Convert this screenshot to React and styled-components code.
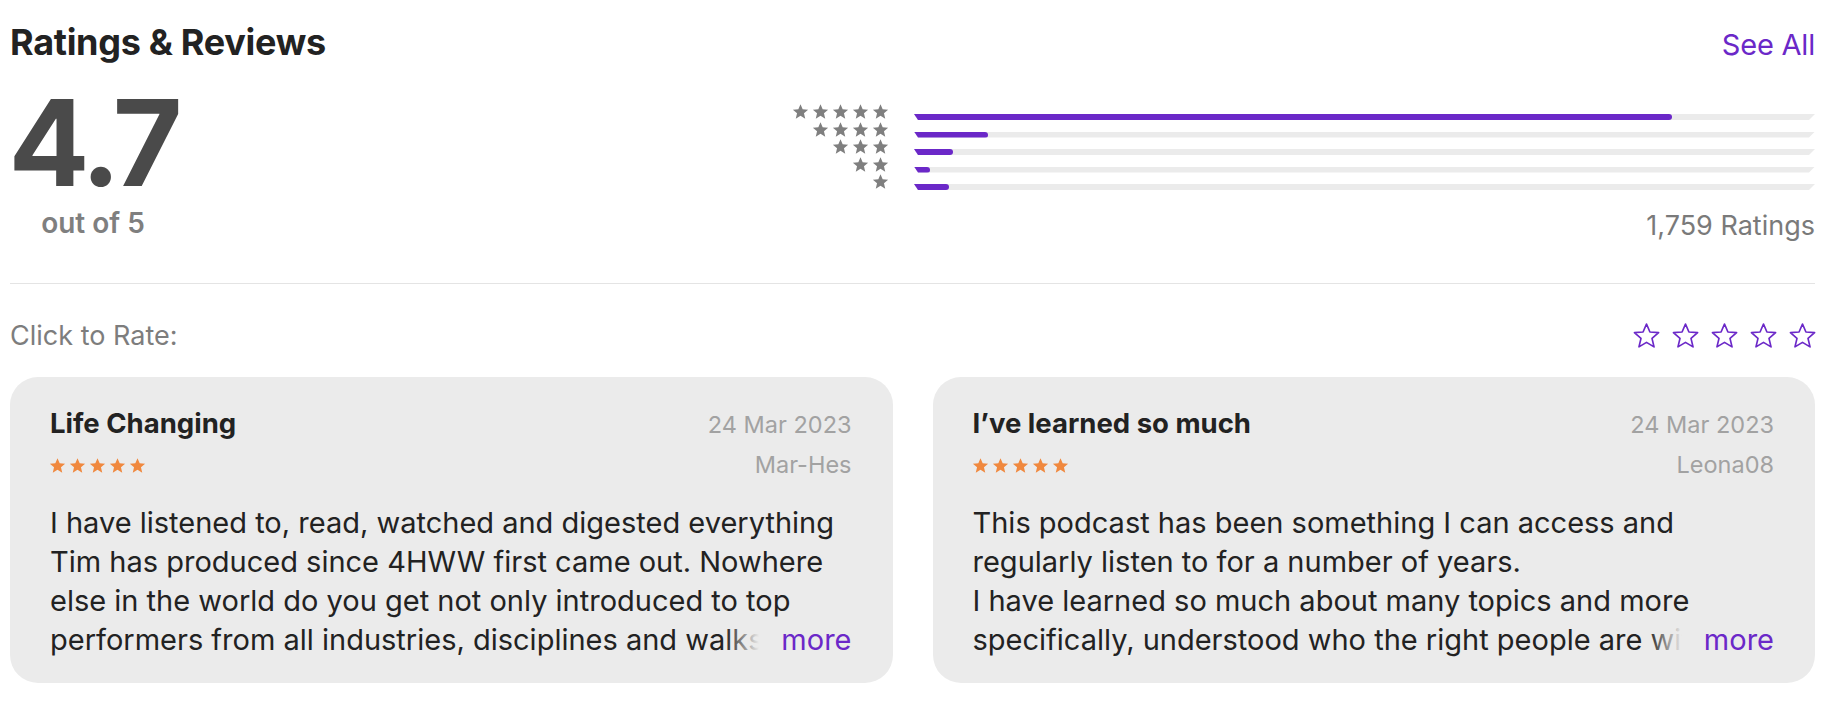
import React from 'react';
import styled, { createGlobalStyle } from 'styled-components';

const PURPLE = '#6b28c8';
const CARD_BG = '#ebebeb';

const GlobalStyle = createGlobalStyle`
  body {
    margin: 0;
    background: #fff;
    font-family: Inter, "Liberation Sans", sans-serif;
    -webkit-font-smoothing: antialiased;
  }
`

const Page = styled.div`
  padding: 19px 21px 0 10px;
`

const Header = styled.div`
  display: flex;
  justify-content: space-between;
  align-items: baseline;
`

const Title = styled.h2`
  margin: 0;
  font-size: 36px;
  line-height: 46px;
  font-weight: 700;
  color: #222;
  letter-spacing: -0.3px;
`

const SeeAll = styled.a`
  font-size: 29px;
  color: ${PURPLE};
  text-decoration: none;
  letter-spacing: -0.2px;
`

// score on the left, histogram on the right
const Summary = styled.div`
  display: flex;
  justify-content: space-between;
  align-items: flex-start;
  padding-bottom: 41px;
  border-bottom: 1px solid #e4e4e4;
`

const Score = styled.div`
  display: flex;
  flex-direction: column;
  align-items: center;
  width: 166px;
  padding-top: 18px;
`

const Big = styled.div`
  font-size: 120px;
  line-height: 120px;
  font-weight: 700;
  color: #4a4a4a;
  letter-spacing: -5px;
`

const OutOf = styled.div`
  font-size: 28px;
  line-height: 32px;
  font-weight: 600;
  color: #7f7f7f;
  margin-top: 4px;
`

const Histogram = styled.div`
  width: 1023px;
  display: flex;
  flex-direction: column;
  align-items: flex-end;
  padding-top: 39px;
`

const Rows = styled.div`
  display: grid;
  grid-template-columns: 97px 1fr;
  grid-auto-rows: 17.5px;
  column-gap: 25px;
  width: 100%;
`

const StarCell = styled.div`
  display: flex;
  justify-content: flex-end;
  align-items: flex-start;
  gap: 3px;
  margin-top: -1px;
`

const Track = styled.div`
  height: 6px;
  margin-top: 10px;
  background: #ebebeb;
  clip-path: polygon(0 0, 100% 0, calc(100% - 6px) 100%, 4px 100%);
`

const Fill = styled.div`
  height: 100%;
  background: ${PURPLE};
  border-radius: 0 3px 3px 0;
`

const Count = styled.div`
  font-size: 27px;
  line-height: 32px;
  color: #7a7a7a;
  margin-top: 18px;
`

const RateRow = styled.div`
  display: flex;
  justify-content: space-between;
  align-items: center;
  margin-top: 36px;
`

const RateLabel = styled.div`
  font-size: 27px;
  line-height: 32px;
  color: #7d7d7d;
`

const RateStars = styled.div`
  display: flex;
  gap: 12px;
  margin-right: -1px;
`

const Cards = styled.div`
  display: grid;
  grid-template-columns: 1fr 1fr;
  gap: 40px;
  margin-top: 25px;
`

const Card = styled.div`
  background: ${CARD_BG};
  border-radius: 28px;
  padding: 28px 41px 0 40px;
  height: 306px;
  box-sizing: border-box;
`

const CardTop = styled.div`
  display: flex;
  justify-content: space-between;
  align-items: baseline;
`

const CardTitle = styled.div`
  font-size: 27.5px;
  line-height: 36px;
  font-weight: 700;
  color: #222;
`

const Meta = styled.div`
  font-size: 23.5px;
  line-height: 30px;
  color: #a2a2a2;
`

const CardSub = styled.div`
  display: flex;
  justify-content: space-between;
  align-items: center;
  margin-top: 9px;
`

const SmallStars = styled.div`
  display: flex;
  gap: 3px;
  margin-left: -1px;
  padding-top: 2px;
`

const Body = styled.div`
  position: relative;
  margin-top: 23px;
`

const BodyText = styled.p`
  margin: 0;
  font-size: 29px;
  line-height: 39px;
  color: #222;
  white-space: pre-line;
  display: -webkit-box;
  -webkit-box-orient: vertical;
  -webkit-line-clamp: 4;
  overflow: hidden;
`

const More = styled.span`
  position: absolute;
  right: 0;
  bottom: 0;
  font-size: 29px;
  line-height: 39px;
  color: ${PURPLE};
  padding-left: 56px;
  background: linear-gradient(to right, rgba(235, 235, 235, 0) 0, ${CARD_BG} 34px);
`

const StarIcon = ({ size, color, outline }) => (
  <svg width={size} height={size} viewBox="0 0 24 24">
    <path
      d="M12 1.8l3.05 7.1 7.7.62-5.86 5.06 1.8 7.52L12 18.1l-6.69 4 1.8-7.52L1.25 9.52l7.7-.62z"
      fill={outline ? 'none' : color}
      stroke={outline ? color : 'none'}
      strokeWidth={outline ? 1.5 : 0}
      strokeLinejoin="round"
    />
  </svg>
);

const bars = [
  { stars: 5, pct: 84.1 },
  { stars: 4, pct: 8.2 },
  { stars: 3, pct: 4.3 },
  { stars: 2, pct: 1.8 },
  { stars: 1, pct: 3.9 },
];

const reviews = [
  {
    title: 'Life Changing',
    date: '24 Mar 2023',
    author: 'Mar-Hes',
    text: 'I have listened to, read, watched and digested everything Tim has produced since 4HWW first came out. Nowhere else in the world do you get not only introduced to top performers from all industries, disciplines and walks of life, but also get to hear how they think.',
  },
  {
    title: 'I\u2019ve learned so much',
    date: '24 Mar 2023',
    author: 'Leona08',
    text: 'This podcast has been something I can access and regularly listen to for a number of years.\nI have learned so much about many topics and more specifically, understood who the right people are with regards to the subjects I care about.',
  },
];

export default function App() {
  return (
    <Page>
      <GlobalStyle />
      <Header>
        <Title>Ratings &amp; Reviews</Title>
        <SeeAll href="#">See All</SeeAll>
      </Header>

      <Summary>
        <Score>
          <Big>4.7</Big>
          <OutOf>out of 5</OutOf>
        </Score>
        <Histogram>
          <Rows>
            {bars.map(b => (
              <React.Fragment key={b.stars}>
                <StarCell>
                  {Array.from({ length: b.stars }).map((_, i) => (
                    <StarIcon key={i} size={17} color="#7f7f7f" />
                  ))}
                </StarCell>
                <Track>
                  <Fill style={{ width: `${b.pct}%` }} />
                </Track>
              </React.Fragment>
            ))}
          </Rows>
          <Count>1,759 Ratings</Count>
        </Histogram>
      </Summary>

      <RateRow>
        <RateLabel>Click to Rate:</RateLabel>
        <RateStars>
          {[0, 1, 2, 3, 4].map(i => (
            <StarIcon key={i} size={27} color={PURPLE} outline />
          ))}
        </RateStars>
      </RateRow>

      <Cards>
        {reviews.map(r => (
          <Card key={r.author}>
            <CardTop>
              <CardTitle>{r.title}</CardTitle>
              <Meta>{r.date}</Meta>
            </CardTop>
            <CardSub>
              <SmallStars>
                {[0, 1, 2, 3, 4].map(i => (
                  <StarIcon key={i} size={17} color="#f0883e" />
                ))}
              </SmallStars>
              <Meta>{r.author}</Meta>
            </CardSub>
            <Body>
              <BodyText>{r.text}</BodyText>
              <More>more</More>
            </Body>
          </Card>
        ))}
      </Cards>
    </Page>
  );
}
